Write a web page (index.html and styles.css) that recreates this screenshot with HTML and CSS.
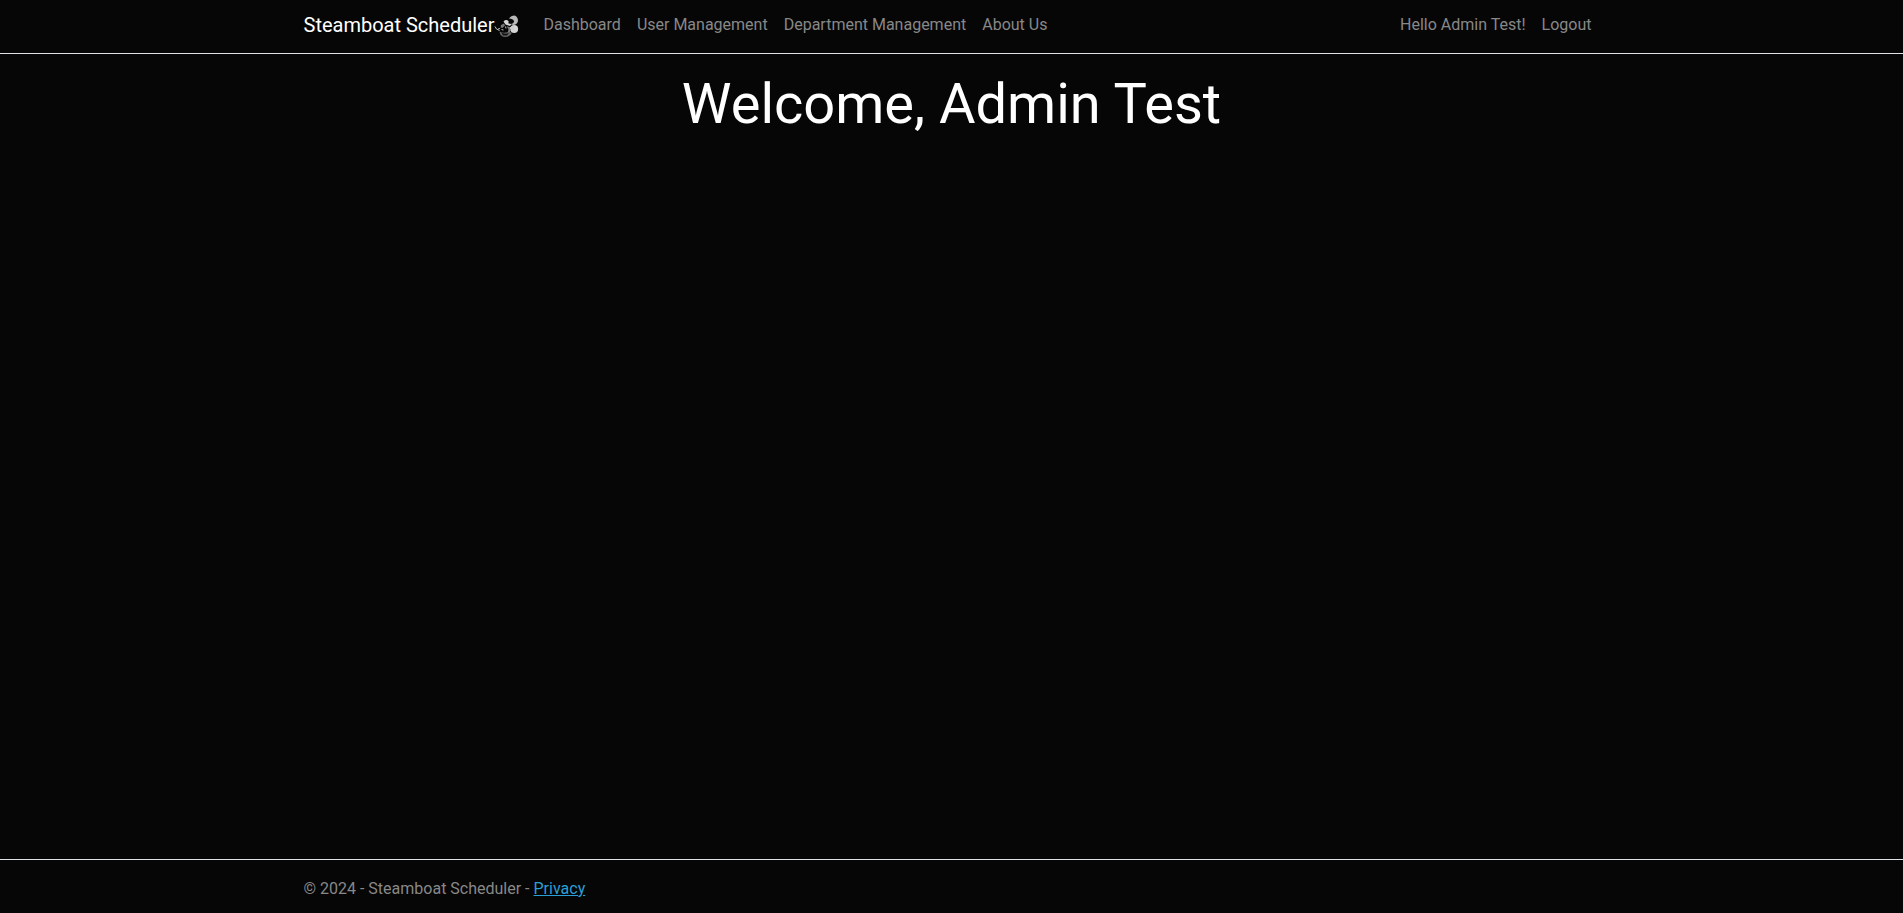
FILE: index.html
```html
<!DOCTYPE html>
<html lang="en">
<head>
<meta charset="utf-8">
<meta name="viewport" content="width=device-width, initial-scale=1">
<title>Steamboat Scheduler</title>
<link rel="stylesheet" href="styles.css">
</head>
<body>
<header class="site-header">
  <nav class="container navbar">
    <a class="brand" href="#">Steamboat Scheduler<svg class="brand-logo" viewBox="-1 0 25 25" aria-hidden="true">
      <path d="M14 3.500Q16 .5 19.500 .5Q23 1.500 23 6Q22 10 18 10L15.500 9Q19 8.500 19 6Q18 3.500 14 3.500Z" fill="#b8b8b8"/>
      <circle cx="19.200" cy="14" r="3.900" fill="#d4d4d4"/>
      <path d="M14 12.500L19 11L19 15L15.500 14.500Z" fill="#ccc"/>
      <path d="M8.500 6.500Q11 4 13.500 6L13.500 8.500L16.500 9L15 11L10.500 9.500Z" fill="#d8d8d8"/>
      <path d="M6 10L9 8.500L10 10.500L7.500 13L5.500 12.500Z" fill="#777"/>
      <path d="M11.500 11L14 12L16 15L14 18L13 17L13.500 14Z" fill="#888"/>
      <path d="M4.500 16.500Q8 18.500 13 17L17 17.500Q15.500 22 9 22Q5 21 4.500 16.500Z" fill="#666"/>
      <path d="M6 17Q9 20 14 18L12 20.500L8 20.500Z" fill="#111"/>
      <path d="M0 11.500L1.500 14L4.500 15.500M3 14L5 13.500M6.500 14.500L8.500 15M10.500 11.500L11 13.500" fill="none" stroke="#bbb"/>
    </svg></a>
    <ul class="nav-list nav-main">
      <li><a class="nav-link" href="#">Dashboard</a></li>
      <li><a class="nav-link" href="#">User Management</a></li>
      <li><a class="nav-link" href="#">Department Management</a></li>
      <li><a class="nav-link" href="#">About Us</a></li>
    </ul>
    <ul class="nav-list">
      <li><a class="nav-link" href="#">Hello Admin Test!</a></li>
      <li><a class="nav-link" href="#">Logout</a></li>
    </ul>
  </nav>
</header>
<main class="container content">
  <h1 class="welcome">Welcome, Admin Test</h1>
</main>
<footer class="site-footer">
  <div class="container">&copy; 2024 - Steamboat Scheduler - <a class="footer-link" href="#">Privacy</a></div>
</footer>
</body>
</html>
```
FILE: styles.css
```css
* {
  box-sizing: border-box;
}

body {
  display: flex;
  flex-direction: column;
  min-height: 100vh;
  margin: 0;
  background: #060606;
  color: #888;
  font-family: Roboto, "Liberation Sans", sans-serif;
  font-size: 16px;
  line-height: 24px;
}

.container {
  width: 100%;
  max-width: 1320px;
  margin: 0 auto;
  padding: 0 12px;
}

.site-header {
  padding: 5px 0 8px;
  border-bottom: 1px solid #dee2e6;
}

.navbar {
  display: flex;
  align-items: center;
}

.brand {
  display: flex;
  align-items: center;
  margin-right: 16px;
  color: #fff;
  font-size: 20px;
  line-height: 30px;
  text-decoration: none;
}

.brand-logo {
  width: 25px;
  height: 25px;
  margin-top: 4px;
}

.nav-list {
  display: flex;
  margin: 0;
  padding: 0;
  list-style: none;
}

.nav-main {
  flex-grow: 1;
}

.nav-link {
  display: block;
  padding: 8px;
  color: #888;
  text-decoration: none;
}

.content {
  flex-grow: 1;
  padding-top: 17px;
  text-align: center;
}

.welcome {
  margin: 0;
  color: #fff;
  font-size: 56px;
  font-weight: 400;
  line-height: 67px;
}

.site-footer {
  padding: 17px 0 12px;
  border-top: 1px solid #dee2e6;
}

.footer-link {
  color: #2a9fd6;
}
```
